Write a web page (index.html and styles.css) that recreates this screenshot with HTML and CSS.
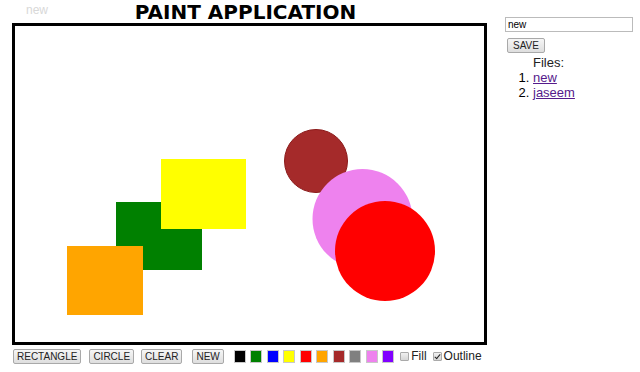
FILE: index.html
```html
<!DOCTYPE html>
<html>
<head>
<meta charset="utf-8">
<link rel="stylesheet" href="styles.css">
</head>
<body>
<div class="page">
  <div class="main">
    <div class="top">
      <span class="filename">new</span>
      <h1 class="title">PAINT APPLICATION</h1>
    </div>
    <div class="canvas">
      <svg width="469" height="316" viewBox="0 0 469 316">
        <rect x="101" y="176" width="86" height="68" fill="#008000"/>
        <rect x="146" y="133" width="85" height="70" fill="#ffff00"/>
        <rect x="52" y="220" width="76" height="69" fill="#ffa500"/>
        <circle cx="301" cy="135" r="31.5" fill="#a52a2a" stroke="#8b1a1a" stroke-width="1"/>
        <circle cx="347.5" cy="193" r="50" fill="#ee82ee"/>
        <circle cx="370" cy="225" r="50" fill="#ff0000"/>
      </svg>
    </div>
    <div class="toolbar">
      <button class="btn btn-rect">RECTANGLE</button>
      <button class="btn btn-circle">CIRCLE</button>
      <button class="btn btn-clear">CLEAR</button>
      <button class="btn btn-new">NEW</button>
      <div class="swatches">
        <span class="sw sw-black"></span>
        <span class="sw sw-green"></span>
        <span class="sw sw-blue"></span>
        <span class="sw sw-yellow"></span>
        <span class="sw sw-red"></span>
        <span class="sw sw-orange"></span>
        <span class="sw sw-brown"></span>
        <span class="sw sw-gray"></span>
        <span class="sw sw-violet"></span>
        <span class="sw sw-purple"></span>
      </div>
      <label class="chk chk-fill"><input type="checkbox">Fill</label>
      <label class="chk chk-outline"><input type="checkbox" checked>Outline</label>
    </div>
  </div>
  <div class="side">
    <input class="name" type="text" value="new">
    <div><button class="btn btn-save">SAVE</button></div>
    <div class="files">Files:</div>
    <ol class="list">
      <li><a href="#">new</a></li>
      <li><a href="#">jaseem</a></li>
    </ol>
  </div>
</div>
</body>
</html>
```
FILE: styles.css
```css
html, body {
  margin: 0;
  padding: 0;
  background: #fff;
  font-family: "Liberation Sans", Arial, sans-serif;
}
.page {
  display: flex;
  align-items: flex-start;
}
.main {
  padding-left: 12px;
  width: 475px;
}
.top {
  display: flex;
  height: 23px;
  align-items: flex-start;
}
.filename {
  margin-left: 14px;
  margin-top: 4px;
  font-size: 12px;
  color: #d8d8d8;
  line-height: 12px;
}
.title {
  flex: 1;
  margin: 1px 44px 0 0;
  text-align: center;
  font-family: "DejaVu Sans", Verdana, sans-serif;
  font-size: 20px;
  line-height: 22px;
  font-weight: bold;
  color: #000;
}
.canvas {
  border: 3px solid #000;
  width: 469px;
  height: 316px;
  background: #fff;
}
.canvas svg {
  display: block;
}
.toolbar {
  display: flex;
  align-items: center;
  margin-top: 2px;
  height: 18px;
}
.btn {
  font-family: "Liberation Sans", Arial, sans-serif;
  font-size: 10px;
  color: #222;
  background: linear-gradient(#f6f6f6, #dedede);
  border: 1px solid #a9a9a9;
  border-radius: 2px;
  height: 15px;
  padding: 0 3px;
  line-height: 13px;
  margin: 0;
}
.btn-rect { margin-left: 1px; }
.btn-circle { margin-left: 8px; }
.btn-clear { margin-left: 7px; }
.btn-new { margin-left: 10px; }
.swatches {
  display: flex;
  gap: 4.5px;
  margin-left: 10px;
}
.sw {
  width: 10px;
  height: 11px;
  border: 1px solid #c8c8c8;
  display: block;
}
.sw-black { background: #000; }
.sw-green { background: #008000; }
.sw-blue { background: #0000ff; }
.sw-yellow { background: #ffff00; }
.sw-red { background: #ff0000; }
.sw-orange { background: #ffa500; }
.sw-brown { background: #a52a2a; }
.sw-gray { background: #808080; }
.sw-violet { background: #ee82ee; }
.sw-purple { background: #8000ff; }
.chk {
  display: flex;
  align-items: center;
  font-size: 12px;
  color: #222;
}
.chk input {
  appearance: none;
  -webkit-appearance: none;
  width: 9px;
  height: 9px;
  margin: 0 2px 0 0;
  border: 1px solid #aaa;
  border-radius: 1px;
  background: linear-gradient(#f0f0f0, #d6d6d6);
  position: relative;
  box-sizing: border-box;
}
.chk input:checked::after {
  content: "";
  position: absolute;
  left: 2px;
  top: 0px;
  width: 2px;
  height: 5px;
  border: solid #222;
  border-width: 0 1.5px 1.5px 0;
  transform: rotate(40deg);
}
.chk-fill { margin-left: 6px; }
.chk-outline { margin-left: 6px; }
.side {
  margin-left: 18px;
  padding-top: 17px;
  font-size: 13px;
}
.name {
  width: 122px;
  height: 13px;
  font-size: 10px;
  padding: 0 2px;
  border: 1px solid #bbb;
  font-family: "Liberation Sans", Arial, sans-serif;
  display: block;
  margin: 0;
}
.btn-save {
  margin: 6px 0 0 2px;
  font-size: 10px;
  height: 15px;
  padding: 0 5px;
}
.files {
  padding-left: 28px;
  line-height: 14px;
  margin-top: 3px;
  color: #222;
}
.list {
  margin: 0;
  padding-left: 28px;
  line-height: 15px;
}
.list a {
  color: #551a8b;
}
```
